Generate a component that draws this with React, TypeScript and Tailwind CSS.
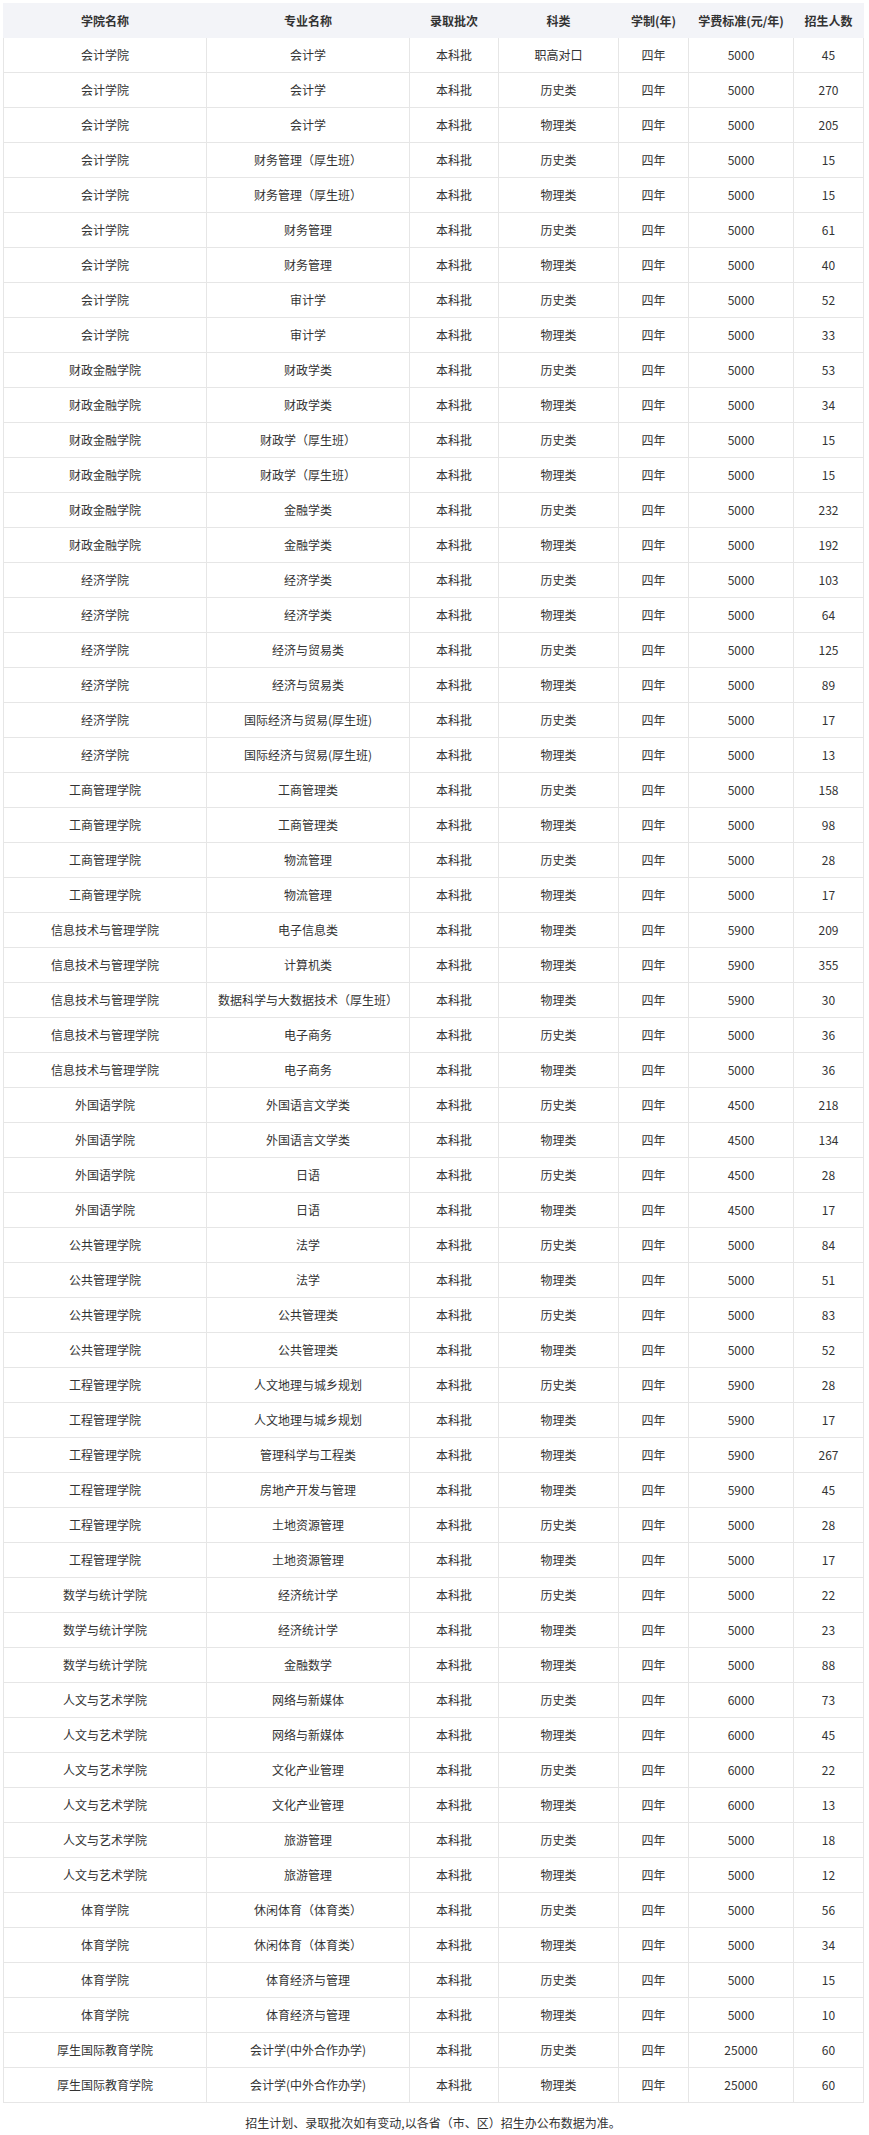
const rows: [string, string, string, string, string][] = [
  ['会计学院', '会计学', '职高对口', '5000', '45'],
  ['会计学院', '会计学', '历史类', '5000', '270'],
  ['会计学院', '会计学', '物理类', '5000', '205'],
  ['会计学院', '财务管理（厚生班）', '历史类', '5000', '15'],
  ['会计学院', '财务管理（厚生班）', '物理类', '5000', '15'],
  ['会计学院', '财务管理', '历史类', '5000', '61'],
  ['会计学院', '财务管理', '物理类', '5000', '40'],
  ['会计学院', '审计学', '历史类', '5000', '52'],
  ['会计学院', '审计学', '物理类', '5000', '33'],
  ['财政金融学院', '财政学类', '历史类', '5000', '53'],
  ['财政金融学院', '财政学类', '物理类', '5000', '34'],
  ['财政金融学院', '财政学（厚生班）', '历史类', '5000', '15'],
  ['财政金融学院', '财政学（厚生班）', '物理类', '5000', '15'],
  ['财政金融学院', '金融学类', '历史类', '5000', '232'],
  ['财政金融学院', '金融学类', '物理类', '5000', '192'],
  ['经济学院', '经济学类', '历史类', '5000', '103'],
  ['经济学院', '经济学类', '物理类', '5000', '64'],
  ['经济学院', '经济与贸易类', '历史类', '5000', '125'],
  ['经济学院', '经济与贸易类', '物理类', '5000', '89'],
  ['经济学院', '国际经济与贸易(厚生班)', '历史类', '5000', '17'],
  ['经济学院', '国际经济与贸易(厚生班)', '物理类', '5000', '13'],
  ['工商管理学院', '工商管理类', '历史类', '5000', '158'],
  ['工商管理学院', '工商管理类', '物理类', '5000', '98'],
  ['工商管理学院', '物流管理', '历史类', '5000', '28'],
  ['工商管理学院', '物流管理', '物理类', '5000', '17'],
  ['信息技术与管理学院', '电子信息类', '物理类', '5900', '209'],
  ['信息技术与管理学院', '计算机类', '物理类', '5900', '355'],
  ['信息技术与管理学院', '数据科学与大数据技术（厚生班）', '物理类', '5900', '30'],
  ['信息技术与管理学院', '电子商务', '历史类', '5000', '36'],
  ['信息技术与管理学院', '电子商务', '物理类', '5000', '36'],
  ['外国语学院', '外国语言文学类', '历史类', '4500', '218'],
  ['外国语学院', '外国语言文学类', '物理类', '4500', '134'],
  ['外国语学院', '日语', '历史类', '4500', '28'],
  ['外国语学院', '日语', '物理类', '4500', '17'],
  ['公共管理学院', '法学', '历史类', '5000', '84'],
  ['公共管理学院', '法学', '物理类', '5000', '51'],
  ['公共管理学院', '公共管理类', '历史类', '5000', '83'],
  ['公共管理学院', '公共管理类', '物理类', '5000', '52'],
  ['工程管理学院', '人文地理与城乡规划', '历史类', '5900', '28'],
  ['工程管理学院', '人文地理与城乡规划', '物理类', '5900', '17'],
  ['工程管理学院', '管理科学与工程类', '物理类', '5900', '267'],
  ['工程管理学院', '房地产开发与管理', '物理类', '5900', '45'],
  ['工程管理学院', '土地资源管理', '历史类', '5000', '28'],
  ['工程管理学院', '土地资源管理', '物理类', '5000', '17'],
  ['数学与统计学院', '经济统计学', '历史类', '5000', '22'],
  ['数学与统计学院', '经济统计学', '物理类', '5000', '23'],
  ['数学与统计学院', '金融数学', '物理类', '5000', '88'],
  ['人文与艺术学院', '网络与新媒体', '历史类', '6000', '73'],
  ['人文与艺术学院', '网络与新媒体', '物理类', '6000', '45'],
  ['人文与艺术学院', '文化产业管理', '历史类', '6000', '22'],
  ['人文与艺术学院', '文化产业管理', '物理类', '6000', '13'],
  ['人文与艺术学院', '旅游管理', '历史类', '5000', '18'],
  ['人文与艺术学院', '旅游管理', '物理类', '5000', '12'],
  ['体育学院', '休闲体育（体育类）', '历史类', '5000', '56'],
  ['体育学院', '休闲体育（体育类）', '物理类', '5000', '34'],
  ['体育学院', '体育经济与管理', '历史类', '5000', '15'],
  ['体育学院', '体育经济与管理', '物理类', '5000', '10'],
  ['厚生国际教育学院', '会计学(中外合作办学)', '历史类', '25000', '60'],
  ['厚生国际教育学院', '会计学(中外合作办学)', '物理类', '25000', '60'],
];

const headers = ['学院名称', '专业名称', '录取批次', '科类', '学制(年)', '学费标准(元/年)', '招生人数'];
const widths = ['w-[203px]', 'w-[203px]', 'w-[89px]', 'w-[120px]', 'w-[70px]', 'w-[105px]', 'w-[70px]'];

const App = () => {
  return (
    <div className="bg-white pt-[3px] pl-[3px] text-[12px] text-[#333] font-['Microsoft_YaHei','Noto_Sans_CJK_SC',sans-serif]">
      <table className="w-[861px] table-fixed border-collapse">
        <colgroup>
          {widths.map((w, i) => <col key={i} className={w} />)}
        </colgroup>
        <thead>
          <tr className="h-[34px] bg-[#f3f4f8]">
            {headers.map(h => (
              <th key={h} className="border border-[#f3f4f8] font-bold text-center p-0">{h}</th>
            ))}
          </tr>
        </thead>
        <tbody>
          {rows.map((r, i) => (
            <tr key={i} className="h-[35px]">
              <td className="border border-[#e6e6e6] text-center p-0">{r[0]}</td>
              <td className="border border-[#e6e6e6] text-center p-0">{r[1]}</td>
              <td className="border border-[#e6e6e6] text-center p-0">本科批</td>
              <td className="border border-[#e6e6e6] text-center p-0">{r[2]}</td>
              <td className="border border-[#e6e6e6] text-center p-0">四年</td>
              <td className="border border-[#e6e6e6] text-center p-0">{r[3]}</td>
              <td className="border border-[#e6e6e6] text-center p-0">{r[4]}</td>
            </tr>
          ))}
        </tbody>
      </table>
      <p className="mt-[10px] pb-[13px] text-center leading-[20px] pr-[6px]">招生计划、录取批次如有变动,以各省（市、区）招生办公布数据为准。</p>
    </div>
  );
};

export default App;
